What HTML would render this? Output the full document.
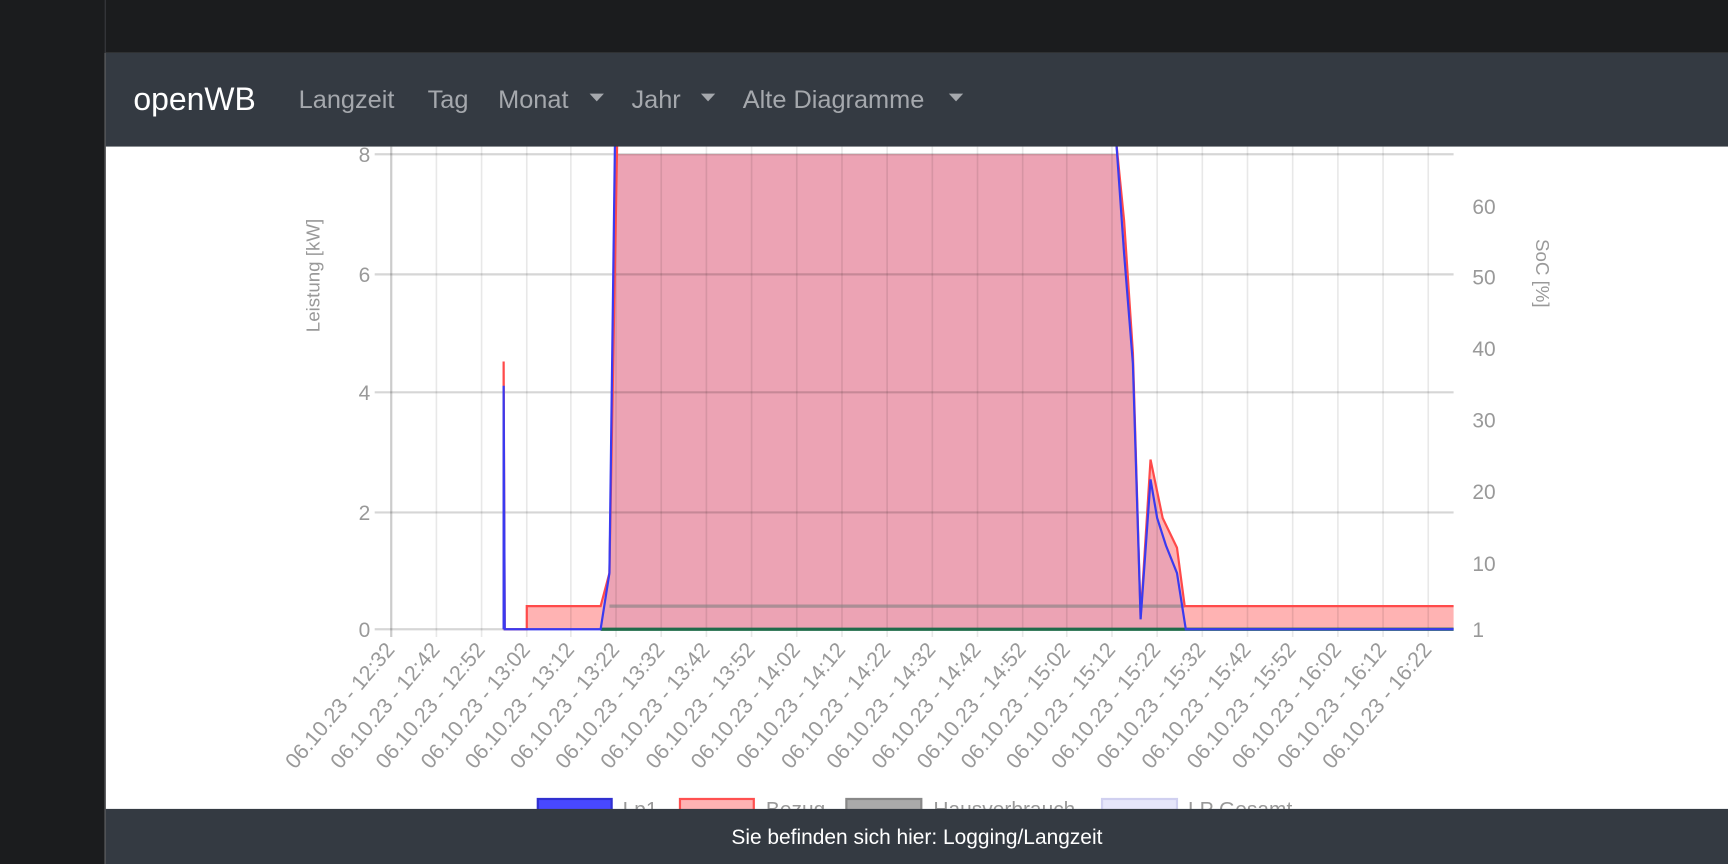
<!DOCTYPE html>
<html><head><meta charset="utf-8"><style>
html,body{margin:0;padding:0;width:1728px;height:864px;overflow:hidden;background:#fff}
svg{display:block}
text{font-family:"Liberation Sans",Roboto,sans-serif}
</style></head><body>
<svg width="1728" height="864" viewBox="0 0 1568 784" xmlns="http://www.w3.org/2000/svg">
<rect x="0" y="0" width="1568" height="784" fill="#fff"/>
<polygon points="478,571 478,550 545,550 553,520 560,140 1013,140 1020,200 1028,320 1035,560 1044,417 1055,470 1068,497 1075,550 1319,550 1319,571" fill="#ffb3b3"/>
<polygon points="545,571 553,520 558,140 1013,140 1020,230 1028,330 1035,562 1044,435 1050,470 1058,495 1068,520 1076,571" fill="#eca3b4"/>
<g stroke="rgba(0,0,0,0.09)" stroke-width="1.5">
<line x1="396" y1="133" x2="396" y2="578"/><line x1="437" y1="133" x2="437" y2="578"/><line x1="478" y1="133" x2="478" y2="578"/><line x1="518" y1="133" x2="518" y2="578"/><line x1="559" y1="133" x2="559" y2="578"/><line x1="600" y1="133" x2="600" y2="578"/><line x1="641" y1="133" x2="641" y2="578"/><line x1="682" y1="133" x2="682" y2="578"/><line x1="723" y1="133" x2="723" y2="578"/><line x1="764" y1="133" x2="764" y2="578"/><line x1="805" y1="133" x2="805" y2="578"/><line x1="846" y1="133" x2="846" y2="578"/><line x1="887" y1="133" x2="887" y2="578"/><line x1="928" y1="133" x2="928" y2="578"/><line x1="968" y1="133" x2="968" y2="578"/><line x1="1009" y1="133" x2="1009" y2="578"/><line x1="1050" y1="133" x2="1050" y2="578"/><line x1="1091" y1="133" x2="1091" y2="578"/><line x1="1132" y1="133" x2="1132" y2="578"/><line x1="1173" y1="133" x2="1173" y2="578"/><line x1="1214" y1="133" x2="1214" y2="578"/><line x1="1255" y1="133" x2="1255" y2="578"/><line x1="1296" y1="133" x2="1296" y2="578"/>
</g>
<line x1="355" y1="133" x2="355" y2="578" stroke="#ccc" stroke-width="2"/>
<g stroke="rgba(0,0,0,0.16)" stroke-width="2">
<line x1="340" y1="140" x2="1319" y2="140"/><line x1="340" y1="249" x2="1319" y2="249"/><line x1="340" y1="356" x2="1319" y2="356"/><line x1="340" y1="465" x2="1319" y2="465"/><line x1="340" y1="571" x2="1319" y2="571"/>
</g>
<polyline points="553,550 1075,550" fill="none" stroke="rgba(128,128,128,0.6)" stroke-width="3"/>
<polyline points="545,571 1319,571" fill="none" stroke="#1f6b4a" stroke-width="3"/>
<polyline points="457,571 457,328 458,571 478,571 478,550 545,550 553,520 560,130 1013,130 1020,200 1028,320 1035,560 1044,417 1055,470 1068,497 1075,550 1319,550" fill="none" stroke="#ff4a4a" stroke-width="2"/>
<polyline points="457,571 457,350 458,571 545,571 553,520 558,130 1013,130 1020,230 1028,330 1035,562 1044,435 1050,470 1058,495 1068,520 1076,571 1319,571" fill="none" stroke="#3a3af0" stroke-width="2"/>
<g fill="#999" font-size="19" text-anchor="end">
<text x="336" y="147">8</text><text x="336" y="256">6</text><text x="336" y="363">4</text><text x="336" y="472">2</text><text x="336" y="578">0</text>
</g>
<g fill="#999" font-size="19">
<text x="1336" y="194">60</text><text x="1336" y="258">50</text><text x="1336" y="323">40</text><text x="1336" y="388">30</text><text x="1336" y="453">20</text><text x="1336" y="518">10</text><text x="1336" y="578">1</text>
</g>
<text transform="translate(290,250) rotate(-90)" fill="#999" font-size="17" text-anchor="middle">Leistung [kW]</text>
<text transform="translate(1394,248) rotate(90)" fill="#999" font-size="17" text-anchor="middle">SoC [%]</text>
<g fill="#999" font-size="19.5" text-anchor="end">
<text transform="translate(359,590) rotate(-50)">06.10.23 - 12:32</text>
<text transform="translate(400,590) rotate(-50)">06.10.23 - 12:42</text>
<text transform="translate(441,590) rotate(-50)">06.10.23 - 12:52</text>
<text transform="translate(482,590) rotate(-50)">06.10.23 - 13:02</text>
<text transform="translate(522,590) rotate(-50)">06.10.23 - 13:12</text>
<text transform="translate(563,590) rotate(-50)">06.10.23 - 13:22</text>
<text transform="translate(604,590) rotate(-50)">06.10.23 - 13:32</text>
<text transform="translate(645,590) rotate(-50)">06.10.23 - 13:42</text>
<text transform="translate(686,590) rotate(-50)">06.10.23 - 13:52</text>
<text transform="translate(727,590) rotate(-50)">06.10.23 - 14:02</text>
<text transform="translate(768,590) rotate(-50)">06.10.23 - 14:12</text>
<text transform="translate(809,590) rotate(-50)">06.10.23 - 14:22</text>
<text transform="translate(850,590) rotate(-50)">06.10.23 - 14:32</text>
<text transform="translate(891,590) rotate(-50)">06.10.23 - 14:42</text>
<text transform="translate(932,590) rotate(-50)">06.10.23 - 14:52</text>
<text transform="translate(972,590) rotate(-50)">06.10.23 - 15:02</text>
<text transform="translate(1013,590) rotate(-50)">06.10.23 - 15:12</text>
<text transform="translate(1054,590) rotate(-50)">06.10.23 - 15:22</text>
<text transform="translate(1095,590) rotate(-50)">06.10.23 - 15:32</text>
<text transform="translate(1136,590) rotate(-50)">06.10.23 - 15:42</text>
<text transform="translate(1177,590) rotate(-50)">06.10.23 - 15:52</text>
<text transform="translate(1218,590) rotate(-50)">06.10.23 - 16:02</text>
<text transform="translate(1259,590) rotate(-50)">06.10.23 - 16:12</text>
<text transform="translate(1300,590) rotate(-50)">06.10.23 - 16:22</text>
</g>
<rect x="488" y="725" width="67" height="20" fill="#4848ff" stroke="#3030d0" stroke-width="2"/>
<rect x="617" y="725" width="67" height="20" fill="#ffb3b3" stroke="#ff5050" stroke-width="2"/>
<rect x="768" y="725" width="68" height="20" fill="#aaa" stroke="#888" stroke-width="2"/>
<rect x="1000" y="725" width="68" height="20" fill="#e6e6fa" stroke="#d0d0f0" stroke-width="2"/>
<g fill="#999" font-size="19"><text x="565" y="741">Lp1</text><text x="695" y="741">Bezug</text><text x="847" y="741">Hausverbrauch</text><text x="1078" y="741">LP Gesamt</text></g>
<rect x="0" y="0" width="1568" height="48" fill="#1b1c1e"/>
<rect x="0" y="0" width="95" height="784" fill="#1b1c1e"/>
<rect x="95" y="0" width="1" height="784" fill="#3a3b3e"/>
<rect x="96" y="48" width="1472" height="85" fill="#343a42"/>
<rect x="96" y="734" width="1472" height="50" fill="#343a42"/>
<text x="121" y="100" fill="#fff" font-size="29">openWB</text>
<g fill="#a5a8ad" font-size="23">
<text x="271" y="98">Langzeit</text><text x="388" y="98">Tag</text><text x="452" y="98">Monat</text><text x="573" y="98">Jahr</text><text x="674" y="98">Alte Diagramme</text>
</g>
<g fill="#a5a8ad"><polygon points="535,85 548,85 541.5,92"/><polygon points="636,85 649,85 642.5,92"/><polygon points="861,85 874,85 867.5,92"/></g>
<text x="832" y="766" fill="#fff" font-size="19" text-anchor="middle">Sie befinden sich hier: Logging/Langzeit</text>
</svg>
</body></html>
